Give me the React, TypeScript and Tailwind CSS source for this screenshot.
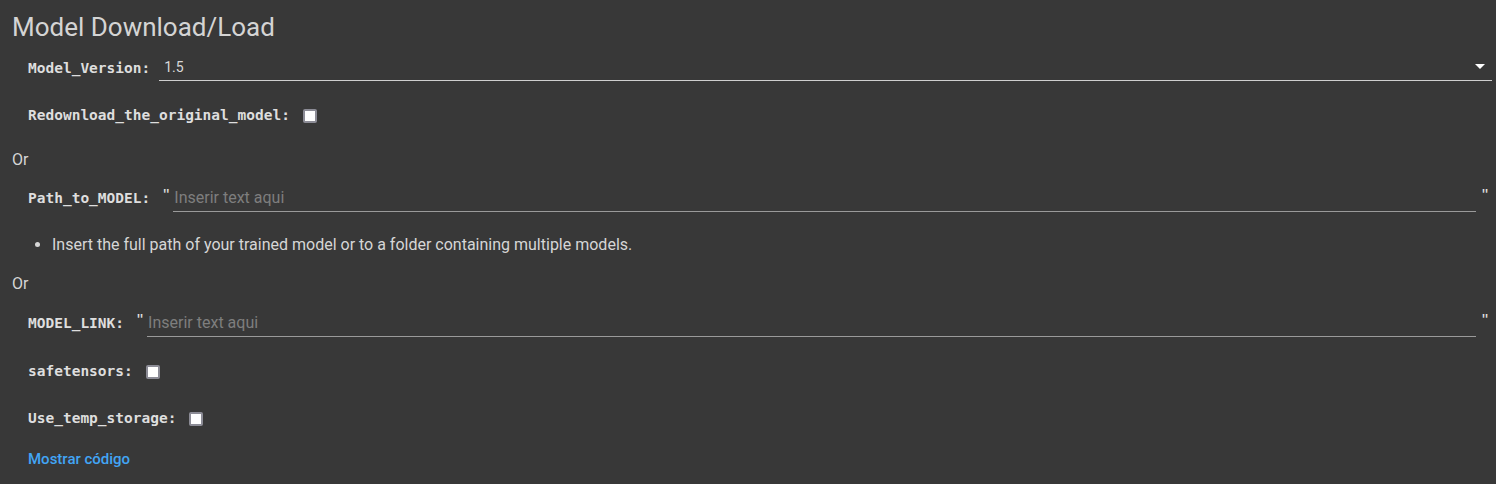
const LABEL = "font-['DejaVu_Sans_Mono',monospace] font-bold text-[14.5px] text-[#dedede] whitespace-nowrap";

function Label({ text }: { text: string }) {
  return <span className={LABEL}>{text}:</span>;
}

function Checkbox() {
  return (
    <span className="ml-[13px] inline-block h-[14px] w-[14px] rounded-[2px] border-2 border-[#8c8c96] bg-white" />
  );
}

function TextField({ placeholder }: { placeholder: string }) {
  return (
    <div className="ml-[13px] flex flex-1 items-start">
      <span className="mt-[-3px] font-['Liberation_Sans',sans-serif] text-[17px] leading-[24px] text-[#e0e0e0]">"</span>
      <div className="ml-[4px] flex h-[25px] flex-1 items-center border-b border-[#9a9a9a] pb-[1px] pl-[1px] text-[16px] text-[#7e7e7e]">
        {placeholder}
      </div>
      <span className="ml-[6px] mt-[-3px] mr-[8px] font-['Liberation_Sans',sans-serif] text-[17px] leading-[24px] text-[#e0e0e0]">"</span>
    </div>
  );
}

export default function App() {
  return (
    <div className="h-[484px] w-full overflow-hidden bg-[#383838] pt-[2px] font-['Roboto',sans-serif] text-[#d6d6d6]">
      <div className="flex h-[50px] items-center pl-[12px] text-[26px] text-[#d4d4d4]">
        Model Download/Load
      </div>

      <div className="mt-[2px] flex h-[30px] items-center pl-[28px]">
        <Label text="Model_Version" />
        <div className="ml-[9px] mr-[4px] flex h-[24px] flex-1 items-center justify-between border-b border-[#cfcfcf] pl-[5px] text-[14px] text-[#d8d8d8]">
          <span className="mt-[-2px]">1.5</span>
          <svg width="10" height="6" viewBox="0 0 10 6" className="mr-[7px] mt-[-3px]">
            <path d="M0 0 L10 0 L5 5 Z" fill="#ffffff" />
          </svg>
        </div>
      </div>

      <div className="mt-[17px] flex h-[30px] items-center pl-[28px]">
        <Label text="Redownload_the_original_model" />
        <Checkbox />
      </div>

      <div className="mt-[19px] flex h-[20px] items-center pl-[12px] text-[16px]">Or</div>

      <div className="mt-[14px] flex h-[30px] items-center pl-[28px]">
        <Label text="Path_to_MODEL" />
        <TextField placeholder="Inserir text aqui" />
      </div>

      <ul className="mt-[21px] flex h-[20px] items-center pl-[52px] text-[16px]">
        <li className="list-disc">
          Insert the full path of your trained model or to a folder containing multiple models.
        </li>
      </ul>

      <div className="mt-[19px] flex h-[20px] items-center pl-[12px] text-[16px]">Or</div>

      <div className="mt-[15px] flex h-[30px] items-center pl-[28px]">
        <Label text="MODEL_LINK" />
        <TextField placeholder="Inserir text aqui" />
      </div>

      <div className="mt-[18px] flex h-[30px] items-center pl-[28px]">
        <Label text="safetensors" />
        <Checkbox />
      </div>

      <div className="mt-[17px] flex h-[30px] items-center pl-[28px]">
        <Label text="Use_temp_storage" />
        <Checkbox />
      </div>

      <div className="mt-[15px] flex h-[20px] items-center pl-[28px] text-[15px] font-medium text-[#42a5f5]">
        Mostrar código
      </div>
    </div>
  );
}
